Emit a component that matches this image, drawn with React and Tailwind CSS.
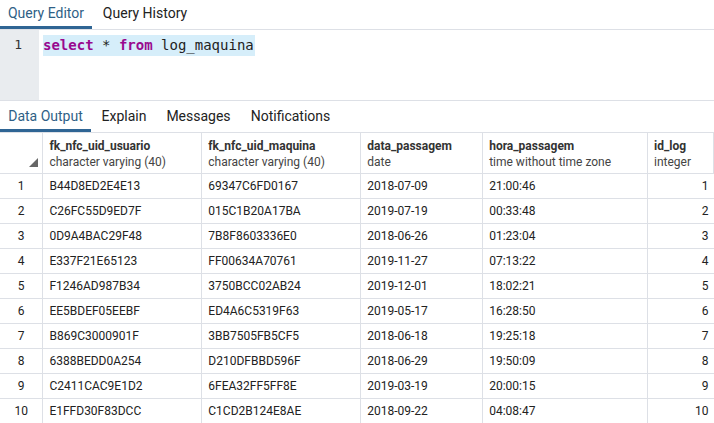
import React from 'react'

const rows = [
  ['B44D8ED2E4E13', '69347C6FD0167', '2018-07-09', '21:00:46', 1],
  ['C26FC55D9ED7F', '015C1B20A17BA', '2019-07-19', '00:33:48', 2],
  ['0D9A4BAC29F48', '7B8F8603336E0', '2018-06-26', '01:23:04', 3],
  ['E337F21E65123', 'FF00634A70761', '2019-11-27', '07:13:22', 4],
  ['F1246AD987B34', '3750BCC02AB24', '2019-12-01', '18:02:21', 5],
  ['EE5BDEF05EEBF', 'ED4A6C5319F63', '2019-05-17', '16:28:50', 6],
  ['B869C3000901F', '3BB7505FB5CF5', '2018-06-18', '19:25:18', 7],
  ['6388BEDD0A254', 'D210DFBBD596F', '2018-06-29', '19:50:09', 8],
  ['C2411CAC9E1D2', '6FEA32FF5FF8E', '2019-03-19', '20:00:15', 9],
  ['E1FFD30F83DCC', 'C1CD2B124E8AE', '2018-09-22', '04:08:47', 10],
]

const cols = [
  { name: 'fk_nfc_uid_usuario', type: 'character varying (40)', w: 'w-[159px]' },
  { name: 'fk_nfc_uid_maquina', type: 'character varying (40)', w: 'w-[159px]' },
  { name: 'data_passagem', type: 'date', w: 'w-[122px]' },
  { name: 'hora_passagem', type: 'time without time zone', w: 'w-[165px]' },
  { name: 'id_log', type: 'integer', w: 'w-[66px]' },
]

function Tab({ label, active, w }) {
  return (
    <div
      className={`flex items-center justify-center ${w} border-b-[3px] ${
        active ? 'border-[#2f6594] text-[#2f5f86]' : 'border-transparent text-[#222]'
      }`}
    >
      {label}
    </div>
  )
}

export default function App() {
  return (
    <div className="w-[714px] h-[423px] overflow-hidden bg-white font-['Roboto',sans-serif] text-[#222]">
      {/* query tabs */}
      <div className="flex h-[30px] border-b border-[#dde0e6] text-[14px]">
        <Tab label="Query Editor" active w="w-[92px]" />
        <Tab label="Query History" w="w-[106px]" />
      </div>

      {/* editor */}
      <div className="flex h-[71px] border-b border-[#dde0e6]">
        <div className="w-[39px] bg-[#e9ecef] pt-[4px] flex justify-end pr-[17px] font-['DejaVu_Sans_Mono',monospace] text-[13px] leading-[21px] text-[#333]">
          1
        </div>
        <div className="flex-1 pt-[3px] pl-[4px]">
          <div className="inline-block bg-[#d6eefa] font-['DejaVu_Sans_Mono',monospace] text-[14px] leading-[21px] text-[#222] pr-[1px]">
            <span className="font-bold text-[#990a8f]">select</span> * <span className="font-bold text-[#990a8f]">from</span> log_maquina
          </div>
        </div>
      </div>

      {/* output tabs */}
      <div className="flex h-[32px] border-b border-[#dde0e6] text-[14px] pt-[3px]">
        <Tab label="Data Output" active w="w-[91px]" />
        <Tab label="Explain" w="w-[66px]" />
        <Tab label="Messages" w="w-[83px]" />
        <Tab label="Notifications" w="w-[101px]" />
      </div>

      {/* result grid */}
      <table className="border-collapse table-fixed text-[12px]">
        <thead>
          <tr className="h-[40px]">
            <th className="w-[43px] border-r border-b border-[#dde0e6] relative p-0">
              <svg className="absolute left-[29px] top-[25px]" width="9" height="9" viewBox="0 0 9 9">
                <path d="M9 0 L9 9 L0 9 Z" fill="#666" />
              </svg>
            </th>
            {cols.map(c => (
              <th
                key={c.name}
                className={`${c.w} border-r border-b border-[#dde0e6] text-left font-normal align-top pt-[5px] px-[6px] leading-[16px]`}
              >
                <div className="font-bold text-[#333]">{c.name}</div>
                <div className="text-[#444]">{c.type}</div>
              </th>
            ))}
          </tr>
        </thead>
        <tbody>
          {rows.map(r => (
            <tr key={r[4]} className="h-[25px]">
              <td className="border-r border-b border-[#dde0e6] text-center p-0">{r[4]}</td>
              <td className="border-r border-b border-[#dde0e6] px-[6px]">{r[0]}</td>
              <td className="border-r border-b border-[#dde0e6] px-[6px]">{r[1]}</td>
              <td className="border-r border-b border-[#dde0e6] px-[6px]">{r[2]}</td>
              <td className="border-r border-b border-[#dde0e6] px-[6px]">{r[3]}</td>
              <td className="border-b border-[#dde0e6] px-[5px] text-right">{r[4]}</td>
            </tr>
          ))}
        </tbody>
      </table>
    </div>
  )
}
